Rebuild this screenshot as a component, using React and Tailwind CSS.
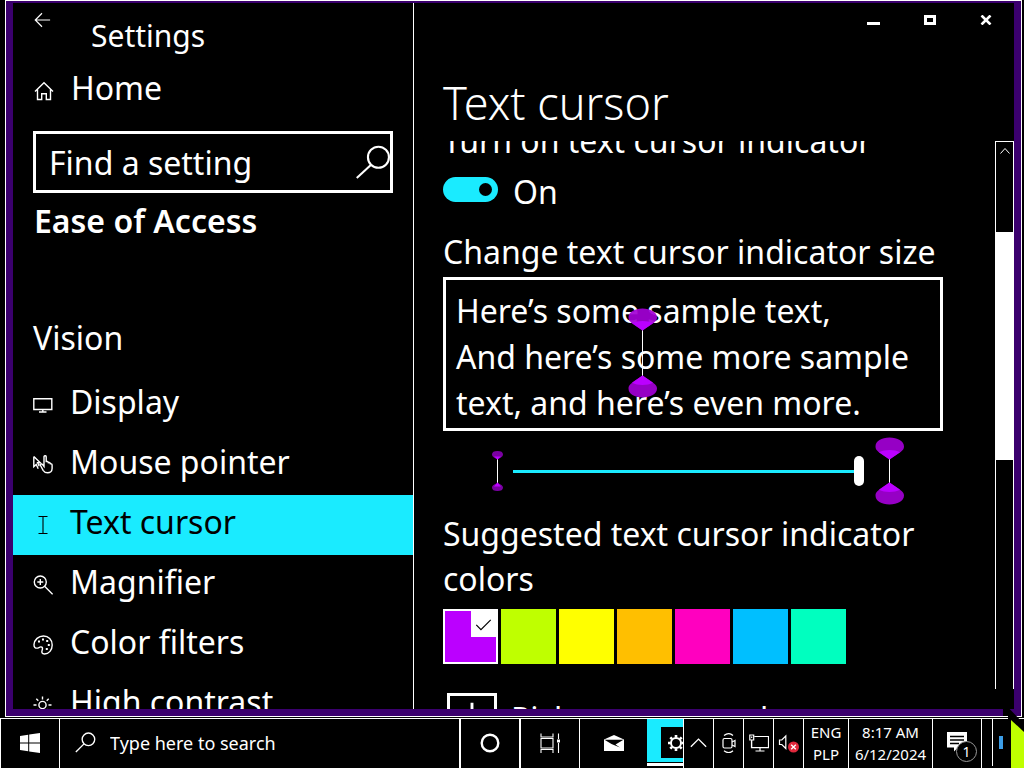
import React, { useState } from "react";

function Icon({ size = 20, children, className = "", sw = 1.4 }) {
  return (
    <svg
      aria-hidden="true"
      className={`shrink-0 ${className}`}
      width={size}
      height={size}
      viewBox="0 0 20 20"
      fill="none"
      stroke="currentColor"
      strokeWidth={sw}
    >
      {children}
    </svg>
  );
}

const icons = {
  display: (
    <Icon>
      <path d="M0.8 3.7h18v10.8h-18zM9.8 14.5v2.2M6 17h7.5" />
    </Icon>
  ),
  mouse: (
    <Icon>
      <path d="M0.8 1.5v10.2l2.4-2.2 2 4.2M0.8 1.5l6.5 6.2H4.6l1.6 3.6" />
      <path d="M7 9.5c1-1 2.2-.6 3 .6l1 1.3V1.8c0-1.5 2.2-1.5 2.2 0v5.4c0-1.2 2-1.2 2 .2v.8c.3-1 2-1 2 .3v.8c.3-.8 1.9-.6 1.900.6v3.600c0 2.600-2 4.300-4.500 4.300-2.300 0-3.400-.8-4.500-2.500z" />
    </Icon>
  ),
  text: (
    <Icon sw={1.1}>
      <path d="M5.500 1.500h9M5.500 18.500h9M10 1.500v17" />
    </Icon>
  ),
  magnifier: (
    <Icon>
      <circle cx="7.300" cy="7" r="6" />
      <path d="M7.300 4v6M4.300 7h6M11.600 11.300l8 8" />
    </Icon>
  ),
  palette: (
    <Icon>
      <path d="M1 9.500C1.500 4.500 5.500 1 10.500 1c5 0 8.700 3.700 8.700 9 0 5-3.200 9-7.700 9-2.700 0-3-1.800-2.400-3.500.8-2.300.5-3.800-1.500-3.600-.9.100-1.600 1-2.900 1.200C2.200 13.500.8 12 1 9.500z" />
      <path d="M5 6.500h2M9 4.500h2M13.200 6h2M14.800 10h2M12.800 14h2" strokeWidth="2" />
    </Icon>
  ),
  sun: (
    <Icon>
      <circle cx="9.500" cy="10" r="3.600" />
      <path d="M9.500 1.500v3M9.500 15.500v3M0.500 10h3M15.500 10h3M3.300 3.800l2 2M15.700 3.800l-2 2M3.300 16.200l2-2M15.700 16.200l-2-2" />
    </Icon>
  ),
};

const navItems = [
  ["Display", "display"],
  ["Mouse pointer", "mouse"],
  ["Text cursor", "text"],
  ["Magnifier", "magnifier"],
  ["Color filters", "palette"],
  ["High contrast", "sun"],
];

const swatches = [
  ["Purple", "bg-[#bb00ff]"],
  ["Lime", "bg-[#bfff00]"],
  ["Yellow", "bg-[#ffff00]"],
  ["Gold", "bg-[#ffbf00]"],
  ["Pink", "bg-[#ff00bf]"],
  ["Turquoise blue", "bg-[#00bfff]"],
  ["Green", "bg-[#00ffbf]"],
];

function Indicator({ height, className = "" }) {
  const h = height;
  return (
    <svg aria-hidden="true" className={className} width="30" height={h} viewBox={`0 0 30 ${h}`}>
      <path d={`M14.500 22V${h - 22}`} stroke="#fff" strokeWidth="1" />
      <g id={`cap-${h}`}>
        <path d="M0.500 9.500C0.500 4 6.500 0.500 14.500 0.500S29 4 29 9.500C29 14 25 15 14.500 22.500C4 15 0.500 14 0.500 9.500z" fill="#a300d6" fillOpacity="0.920" />
        <path d="M4 15.200c6-3 15-3 21 0L14.500 22.500z" fill="#bb00ff" />
      </g>
      <use href={`#cap-${h}`} transform={`translate(0 ${h}) scale(1 -1)`} />
    </svg>
  );
}

function SmallIndicator() {
  return (
    <svg aria-hidden="true" width="14" height="44" viewBox="0 0 14 44">
      <path d="M7.500 8v28" stroke="#fff" strokeWidth="1" />
      <path d="M2 5.500C2 3 4 2 7.500 2S13 3 13 5.500 9.500 9 7.500 10.500C5.500 9 2 8 2 5.500z" fill="#7a00a3" />
      <path d="M4 7.500h7l-3.500 3z" fill="#bb00ff" />
      <path d="M2 38.500C2 41 4 42 7.500 42S13 41 13 38.500 9.500 35.500 7.500 33.500c-2 2-5.500 2.500-5.500 5z" fill="#7a00a3" />
      <path d="M4 37.500h7l-3.500-4z" fill="#bb00ff" />
    </svg>
  );
}

function Sidebar() {
  return (
    <aside className="flex w-[401px] shrink-0 flex-col border-r border-white [&>*]:shrink-0">
      <header className="flex h-[54px] items-start">
        <button aria-label="Back" className="ml-5 mt-2">
          <Icon size={18} sw={1.3}>
            <path d="M19 10H2.500M10 2.500L2.500 10l7.500 7.500" />
          </Icon>
        </button>
        <h1 className="ml-10 mt-[10px] text-3xl leading-[45px]">Settings</h1>
      </header>
      <a href="#home" className="ml-[21px] flex h-[60px] items-center gap-[17px]">
        <Icon className="mt-2">
          <path d="M1 10.500L10 1.800l9 8.700M3.500 8.500v10h4.200v-5.800h4.600v5.800h4.200v-10" />
        </Icon>
        <span>Home</span>
      </a>
      <div className="mx-5 mt-[14px] flex h-[62px] items-center border-[3px] border-white">
        <input
          type="text"
          aria-label="Find a setting"
          placeholder="Find a setting"
          className="min-w-0 flex-1 bg-transparent pl-[13px] outline-none placeholder:text-white placeholder:opacity-100"
        />
        <button aria-label="Search" className="shrink-0">
          <Icon size={35} sw={1.2}>
            <circle cx="13.400" cy="7" r="6" />
            <path d="M9.200 11.300L1 18.800" />
          </Icon>
        </button>
      </div>
      <h2 className="ml-[21px] mt-[5px] font-semibold leading-[45px]">Ease of Access</h2>
      <h3 className="ml-5 mt-[72px] leading-[45px]">Vision</h3>
      <nav className="mt-[15px] flex flex-col">
        {navItems.map(([label, icon]) => (
          <a
            key={label}
            href={`#${icon}`}
            aria-current={label === "Text cursor" ? "page" : undefined}
            className={
              label === "Text cursor"
                ? "flex h-[60px] items-center gap-[17px] bg-[#1aebff] pl-5 text-black"
                : "flex h-[60px] items-center gap-[17px] pl-5"
            }
          >
            {icons[icon]}
            <span className="pb-2">{label}</span>
          </a>
        ))}
      </nav>
    </aside>
  );
}

function Content() {
  const [on, setOn] = useState(true);
  const [size, setSize] = useState(5);
  return (
    <div className="flex w-[500px] min-w-0 flex-col [&>*]:shrink-0">
      <p id="toggle-title" className="-mt-[23px] leading-[45px]">Turn on text cursor indicator</p>
      <label className="flex h-[53px] items-center gap-[15px] leading-[45px]">
        <span className="flex h-[25px] w-[55px] items-center justify-end rounded-full bg-[#1aebff] pr-[6px]">
          <input
            type="checkbox"
            role="switch"
            aria-labelledby="toggle-title"
            checked={on}
            onChange={(e) => setOn(e.target.checked)}
            className="h-[13px] w-[13px] appearance-none rounded-full bg-black"
          />
        </span>
        <span className="mt-1">On</span>
      </label>
      <label htmlFor="size" className="mt-[13px] whitespace-nowrap leading-[45px]">Change text cursor indicator size</label>
      <div className="relative mt-[3px] border-[3px] border-white px-[10px] pb-[2px] pt-2 leading-[46px]">
        <p className="whitespace-nowrap">
          Here’s some sample text,
          <br />
          And here’s some more sample
          <br />
          text, and here’s even more.
        </p>
        <Indicator height={90} className="absolute left-[182px] top-[28px]" />
      </div>
      <div className="mt-[6px] flex h-[68px] items-center pl-[47px]">
        <SmallIndicator />
        <input
          id="size"
          type="range"
          min="1"
          max="5"
          value={size}
          onChange={(e) => setSize(Number(e.target.value))}
          className="ml-[9px] mr-[11px] h-[30px] w-[351px] appearance-none bg-transparent [&::-webkit-slider-runnable-track]:h-[3px] [&::-webkit-slider-runnable-track]:bg-[#1aebff] [&::-webkit-slider-thumb]:-mt-[14px] [&::-webkit-slider-thumb]:h-[30px] [&::-webkit-slider-thumb]:w-[10px] [&::-webkit-slider-thumb]:appearance-none [&::-webkit-slider-thumb]:rounded-full [&::-webkit-slider-thumb]:bg-white"
        />
        <Indicator height={68} />
      </div>
      <h3 className="mt-[6px] whitespace-nowrap leading-[45px]">
        Suggested text cursor indicator
        <br />
        colors
      </h3>
      <div className="mt-2 flex gap-[3px]">
        {swatches.map(([name, color], i) => (
          <button key={name} aria-label={name} className={`flex h-[55px] w-[55px] items-start justify-end ${color} ${i === 0 ? "border-2 border-white" : ""}`}>
            {i === 0 && (
              <span className="flex h-[26px] w-[25px] items-center justify-center bg-white text-black">
                <Icon size={17} sw={1.4}>
                  <path d="M1.500 10.500l5.500 5.500L18.500 4.500" />
                </Icon>
              </span>
            )}
          </button>
        ))}
      </div>
      <button className="ml-1 mt-[29px] flex items-center gap-[14px] text-left">
        <span className="flex h-[50px] w-[50px] items-center justify-center border-[3px] border-white">
          <Icon size={34} sw={1.7}>
            <path d="M10 1v18M1 10h18" />
          </Icon>
        </span>
        <span>Pick a custom color</span>
      </button>
    </div>
  );
}

function ScrollBar() {
  return (
    <div aria-hidden="true" className="mb-5 flex w-[19px] flex-col border-x border-t border-white">
      <div className="flex min-h-0 flex-[90] justify-center">
        <Icon size={10} sw={2} className="mt-1">
          <path d="M1 15l9-10 9 10" />
        </Icon>
      </div>
      <div className="flex-[229] bg-white" />
      <div className="flex-[229]" />
    </div>
  );
}

function SettingsWindow() {
  return (
    <div className="ml-[5px] mr-[2px] flex min-h-0 flex-1 flex-col border border-white bg-[#3b006e] px-[7px] pb-[7px] pt-[2px]">
      <div className="flex min-h-0 flex-1 overflow-hidden bg-black">
        <Sidebar />
        <main className="flex min-w-0 flex-1 flex-col">
          <div className="flex h-[34px] shrink-0 items-center justify-end gap-[44px] pr-[22px]">
            <button aria-label="Minimize">
              <svg width="13" height="12" viewBox="0 0 13 12"><path d="M0 8h13v3H0z" fill="#fff" /></svg>
            </button>
            <button aria-label="Maximize">
              <svg width="12" height="10" viewBox="0 0 12 10"><path d="M1.500 1.500h9v7h-9z" fill="none" stroke="#fff" strokeWidth="3" /></svg>
            </button>
            <button aria-label="Close">
              <svg width="12" height="10" viewBox="0 0 12 10"><path d="M1.500 0.500l9 9M10.500 0.500l-9 9" stroke="#fff" strokeWidth="2.600" /></svg>
            </button>
          </div>
          <h2 className="ml-[29px] mt-[34px] h-[70px] shrink-0 text-[45px] font-light leading-[64px]">Text cursor</h2>
          <div className="flex min-h-0 flex-1 justify-between overflow-hidden pl-[29px]">
            <Content />
            <ScrollBar />
          </div>
        </main>
      </div>
    </div>
  );
}

function Taskbar() {
  return (
    <footer className="flex h-[50px] shrink-0 items-stretch border-t border-white bg-black text-[15px] leading-[22px] [&>*]:pb-0.5">
      <button aria-label="Start" className="flex w-[60px] items-center justify-center border-x border-white">
        <svg width="20" height="20" viewBox="0 0 20 20" fill="#fff">
          <path d="M0 2.900l8.200-1.200v7.800H0zM9.200 1.500L20 0v9.500H9.200zM0 10.500h8.200v7.800L0 17.100zM9.200 10.500H20V20L9.200 18.500z" />
        </svg>
      </button>
      <div className="flex min-w-0 flex-1 items-center gap-[14px] pl-[15px]">
        <Icon size={21} sw={1.3}>
          <circle cx="12.800" cy="7" r="6" />
          <path d="M8.600 11.300L0.800 19" />
        </Icon>
        <input
          type="text"
          aria-label="Type here to search"
          placeholder="Type here to search"
          className="min-w-0 flex-1 bg-transparent text-lg outline-none placeholder:text-white placeholder:opacity-100"
        />
      </div>
      <button aria-label="Cortana" className="flex w-[60px] items-center justify-center border-l-2 border-white">
        <Icon sw={2.4}><circle cx="10" cy="10" r="8.300" /></Icon>
      </button>
      <button aria-label="Task view" className="flex w-[60px] items-center justify-center border-l-2 border-white">
        <Icon size={20} sw={1.1}>
          <path d="M1 5.500h12v9.500H1zM1 0.500V4h12V0.500M1 20v-3.500h12V20M18.500 0.500V6M18.500 10v10" />
          <path d="M17 6.500h3v3h-3z" fill="currentColor" stroke="none" />
        </Icon>
      </button>
      <button aria-label="Mail" className="flex w-[68px] items-center justify-center border-l border-white">
        <svg width="20" height="16" viewBox="0 0 20 16">
          <path d="M0 4.500L10 0l10 4.500V16H0z" fill="#fff" />
          <path d="M0.500 4.800h19l-8 4.600 4.500 3L7.500 9z" fill="#000" />
        </svg>
      </button>
      <button aria-label="Settings" className="flex w-9 flex-col overflow-hidden bg-[linear-gradient(#1aebff_44px,#000_44px)]">
        <span className="ml-[14px] mt-2 flex h-[31px] w-9 items-center bg-black pl-[6px]">
          <svg width="18" height="18" viewBox="0 0 18 18" fill="none" stroke="#fff">
            <circle cx="9" cy="9" r="5" strokeWidth="2" />
            <path d="M9 1v2.500M9 14.500V17M1 9h2.500M14.500 9H17M3.300 3.300l1.800 1.800M12.900 12.900l1.800 1.800M14.700 3.300l-1.800 1.800M5.100 12.900l-1.800 1.800" strokeWidth="2.600" />
          </svg>
        </span>
        <span className="mt-[4px] h-[4px] w-full shrink-0 border-t border-black bg-white" />
      </button>
      <button aria-label="Show hidden icons" className="flex w-[30px] items-center justify-center border-l border-white">
        <Icon size={17} sw={1.6}><path d="M1 15l9-9 9 9" /></Icon>
      </button>
      <button aria-label="Meet now" className="flex w-[30px] items-center justify-center border-l border-white">
        <Icon size={20} sw={1.2}>
          <rect x="4" y="5.500" width="9" height="9.500" rx="1.500" />
          <path d="M13 9l3-1.500v6L13 12M16 7v7M5 2.500C8 .2 11.500.2 14 2.500M5 17.800c3 2.300 6.500 2.300 9 0" />
        </Icon>
      </button>
      <button aria-label="Network" className="flex w-[30px] items-center justify-center border-l border-white">
        <Icon size={20} sw={1.2}>
          <path d="M5.500 3.500h14v11.200h-17V8M11 14.700v3M6.500 18h9M0.800 2h3.900v5H0.800zM2.700 7v7.500M2.700 3.500v1.500" />
        </Icon>
      </button>
      <button aria-label="Volume muted" className="flex w-[30px] items-center justify-center border-l border-white">
        <svg width="22" height="20" viewBox="0 0 22 20">
          <path d="M1.500 7h2.300l4-4v12.500l-4-4H1.500z" fill="none" stroke="#fff" strokeWidth="1.200" />
          <circle cx="15.500" cy="14" r="5.500" fill="#e0283c" />
          <path d="M13.200 11.700l4.600 4.600M17.800 11.700l-4.600 4.600" stroke="#fff" strokeWidth="1.300" />
        </svg>
      </button>
      <button className="flex w-[45px] flex-col items-center justify-center border-l border-white">
        <span>ENG</span>
        <span>PLP</span>
      </button>
      <button className="flex w-[84px] flex-col items-center justify-center border-l border-white">
        <span>8:17 AM</span>
        <span>6/12/2024</span>
      </button>
      <button aria-label="1 notification" className="relative flex w-[50px] border-x border-white pl-[14px] pt-[13px]">
        <svg width="20" height="20" viewBox="0 0 20 20">
          <path d="M0 0h20v15.500h-9L7 19.500v-4H0z" fill="#fff" />
          <path d="M3 4.500h14M3 8h14M3 11.500h9" stroke="#000" strokeWidth="1.500" />
        </svg>
        <span className="absolute left-[23px] top-[22px] flex h-[21px] w-[21px] items-center justify-center rounded-full border border-[#999] bg-black text-sm">1</span>
      </button>
      <div className="flex w-[42px] pl-[10px]">
        <div className="flex w-8 items-center border-l border-white pl-[6px]">
          <span className="h-[13px] w-1 bg-[#3c9ee8]" />
        </div>
      </div>
    </footer>
  );
}

export default function App() {
  return (
    <div className="relative flex h-screen flex-col overflow-hidden bg-black font-['Noto_Sans','Open_Sans',sans-serif] text-[32px] leading-[45px] text-white">
      <SettingsWindow />
      <div className="h-px shrink-0 bg-black" />
      <Taskbar />
      <svg aria-hidden="true" className="pointer-events-none absolute bottom-0 right-0" width="24" height="70" viewBox="0 0 24 70">
        <path d="M3 4L24 26v44H13V50H8V18H3z" fill="#000" />
        <path d="M11 22l13 12v36H11z" fill="#bfff00" />
      </svg>
    </div>
  );
}
